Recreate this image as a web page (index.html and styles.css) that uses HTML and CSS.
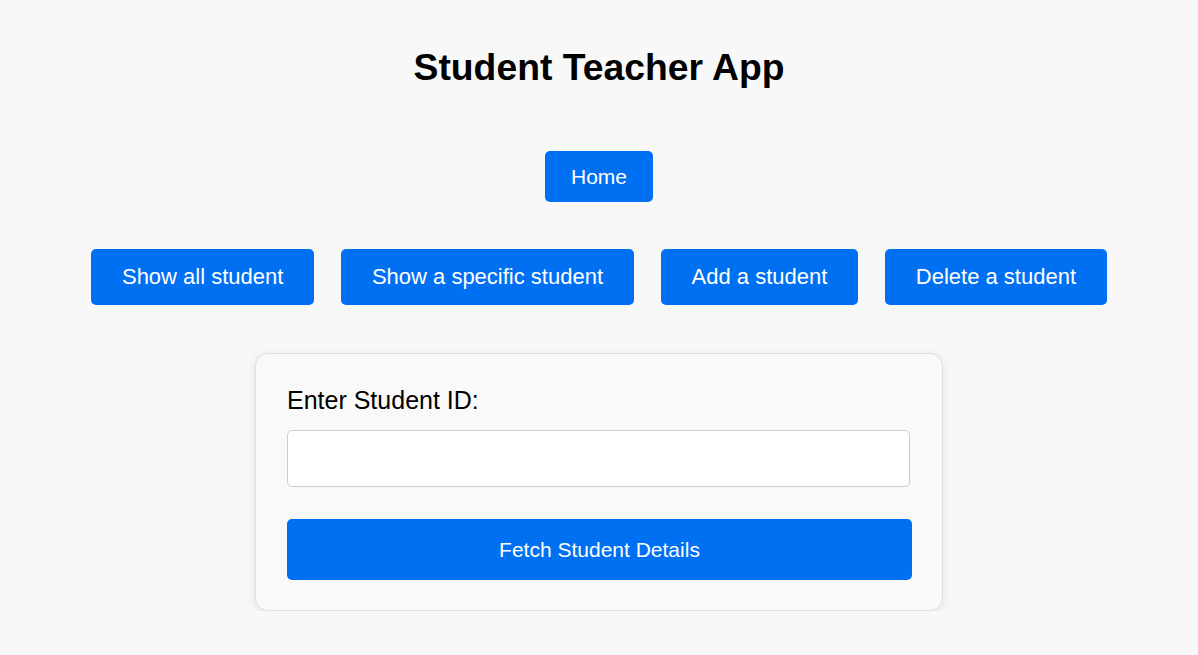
FILE: index.html
```html
<!DOCTYPE html>
<html lang="en">
<head>
<meta charset="utf-8">
<title>Student Teacher App</title>
<link rel="stylesheet" href="styles.css">
</head>
<body>
<main class="app">
  <h1 class="title">Student Teacher App</h1>
  <nav class="home-nav">
    <button class="btn btn-home">Home</button>
  </nav>
  <div class="actions">
    <button class="btn btn-action">Show all student</button>
    <button class="btn btn-action">Show a specific student</button>
    <button class="btn btn-action">Add a student</button>
    <button class="btn btn-action">Delete a student</button>
  </div>
  <form class="card">
    <label class="label" for="sid">Enter Student ID:</label>
    <input class="input" id="sid" type="text">
    <button class="btn btn-submit" type="button">Fetch Student Details</button>
  </form>
</main>
</body>
</html>
```
FILE: styles.css
```css
html, body {
  margin: 0;
  padding: 0;
  background: #f8f8f8;
}
body {
  font-family: "Liberation Sans", Arial, sans-serif;
  color: #000;
}
.app {
  display: flex;
  flex-direction: column;
  align-items: center;
  padding-top: 46px;
}
.title {
  margin: 0;
  font-size: 37.3px;
  line-height: 43px;
  font-weight: bold;
}
.home-nav {
  margin-top: 62px;
  display: flex;
  justify-content: center;
}
.btn {
  font-family: "Liberation Sans", Arial, sans-serif;
  background: #0070f3;
  color: #fff;
  border: none;
  border-radius: 5px;
  cursor: pointer;
}
.btn-home {
  font-size: 21px;
  line-height: 24px;
  padding: 13.5px 26px;
}
.actions {
  margin-top: 47px;
  display: flex;
  justify-content: center;
  gap: 27.5px;
}
.btn-action {
  font-size: 22px;
  line-height: 26px;
  padding: 15px 30.5px;
}
.card {
  margin-top: 48px;
  width: 688px;
  box-sizing: border-box;
  padding: 32px 30px 30px 31px;
  background: #f9f9f9;
  border: 1px solid #e0e0e0;
  border-radius: 13px;
  box-shadow: 0 2px 10px rgba(0, 0, 0, 0.09);
  display: flex;
  flex-direction: column;
}
.label {
  font-size: 25px;
  line-height: 28px;
}
.input {
  margin-top: 16px;
  width: 623px;
  height: 57px;
  box-sizing: border-box;
  border: 1px solid #ccc;
  border-radius: 5px;
  background: #fff;
  font-size: 20px;
  padding: 0 12px;
}
.btn-submit {
  margin-top: 32px;
  width: 100%;
  font-size: 21px;
  line-height: 24px;
  padding: 18.5px 0;
}
```
